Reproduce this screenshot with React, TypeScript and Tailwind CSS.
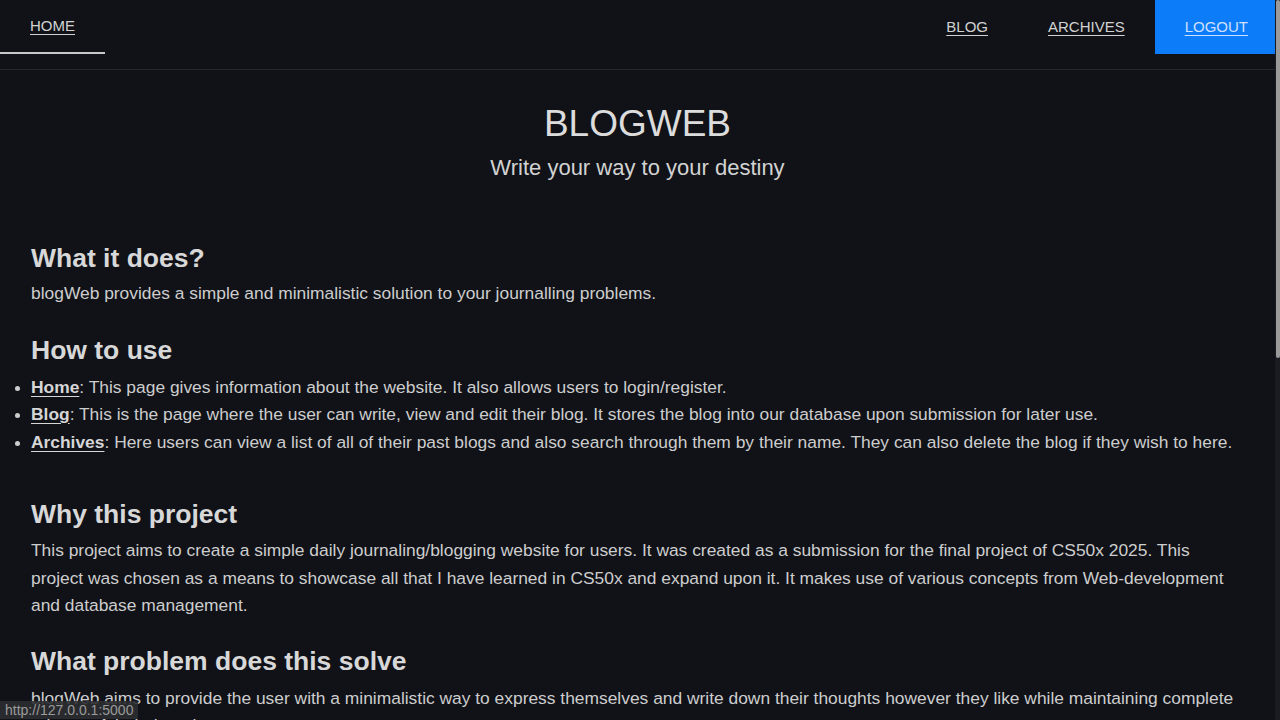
import React from "react";

const navItem =
  "h-[54px] flex items-center px-[30px] text-[15px] underline underline-offset-[3px] decoration-1";

function Nav() {
  return (
    <nav className="h-[70px] border-b border-[#262830] flex items-start justify-between">
      <a className={`${navItem} border-b-2 border-[#c8c8c8] text-[#d2d2d2]`}>HOME</a>
      <div className="flex">
        <a className={`${navItem} text-[#d2d2d2]`}>BLOG</a>
        <a className={`${navItem} text-[#d2d2d2]`}>ARCHIVES</a>
        <a className={`${navItem} bg-[#0d7cf9] text-[#cfe0ff] pr-[27px]`}>LOGOUT</a>
      </div>
    </nav>
  );
}

function Section({ title, children }: { title: string; children?: React.ReactNode }) {
  return (
    <section className="px-[31px]">
      <h2 className="text-[26.5px] font-bold text-[#d8d8d8] leading-[32px]">{title}</h2>
      {children}
    </section>
  );
}

const items = [
  ["Home", ": This page gives information about the website. It also allows users to login/register."],
  ["Blog", ": This is the page where the user can write, view and edit their blog. It stores the blog into our database upon submission for later use."],
  ["Archives", ": Here users can view a list of all of their past blogs and also search through them by their name. They can also delete the blog if they wish to here."],
];

export default function App() {
  return (
    <div
      className="h-[720px] w-[1280px] overflow-hidden bg-[#101218] text-[#cdcdcd] flex relative"
      style={{ fontFamily: '"Liberation Sans", Arial, sans-serif' }}
    >
      <div className="w-[1275px] shrink-0">
        <Nav />
        <header className="text-center pt-[32px]">
          <h1 className="text-[37px] leading-[44px] text-[#dcdcdc]">BLOGWEB</h1>
          <p className="text-[22px] leading-[30px] mt-[7px] text-[#d2d2d2]">Write your way to your destiny</p>
        </header>

        <div className="mt-[59px] flex flex-col text-[17.4px] leading-[27.5px]">
          <Section title="What it does?">
            <p className="mt-[6px]">
              blogWeb provides a simple and minimalistic solution to your journalling problems.
            </p>
          </Section>

          <div className="mt-[26px]">
            <Section title="How to use" />
            <ul className="mt-[8px] pl-[31px] list-disc">
              {items.map(([k, v]) => (
                <li key={k} className="marker:text-[#cdcdcd] marker:text-[15px]">
                  <a className="font-bold underline underline-offset-[3px] text-[#d6d6d6]">{k}</a>
                  {v}
                </li>
              ))}
            </ul>
          </div>

          <div className="mt-[42px]">
            <Section title="Why this project">
              <p className="mt-[7px]">
                This project aims to create a simple daily journaling/blogging website for users. It was
                created as a submission for the final project of CS50x 2025. This project was chosen as a
                means to showcase all that I have learned in CS50x and expand upon it. It makes use of
                various concepts from Web-development and database management.
              </p>
            </Section>
          </div>

          <div className="mt-[25px]">
            <Section title="What problem does this solve">
              <p className="mt-[8px]">
                blogWeb aims to provide the user with a minimalistic way to express themselves and write
                down their thoughts however they like while maintaining complete privacy of their thoughts.
              </p>
            </Section>
          </div>
        </div>
      </div>

      {/* scrollbar */}
      <div className="w-[5px] h-full bg-[#1a1b20] flex flex-col">
        <div className="h-[358px] mx-[0.5px] bg-[#9a9a9a] rounded-[2px]" />
      </div>

      {/* link preview in the corner */}
      <div className="absolute left-0 bottom-[1px] bg-[#2c2d31]/90 text-[#9a9a9a] text-[14px] leading-[18px] px-[5px] rounded-tr-[3px]">
        http://127.0.0.1:5000
      </div>
    </div>
  );
}
